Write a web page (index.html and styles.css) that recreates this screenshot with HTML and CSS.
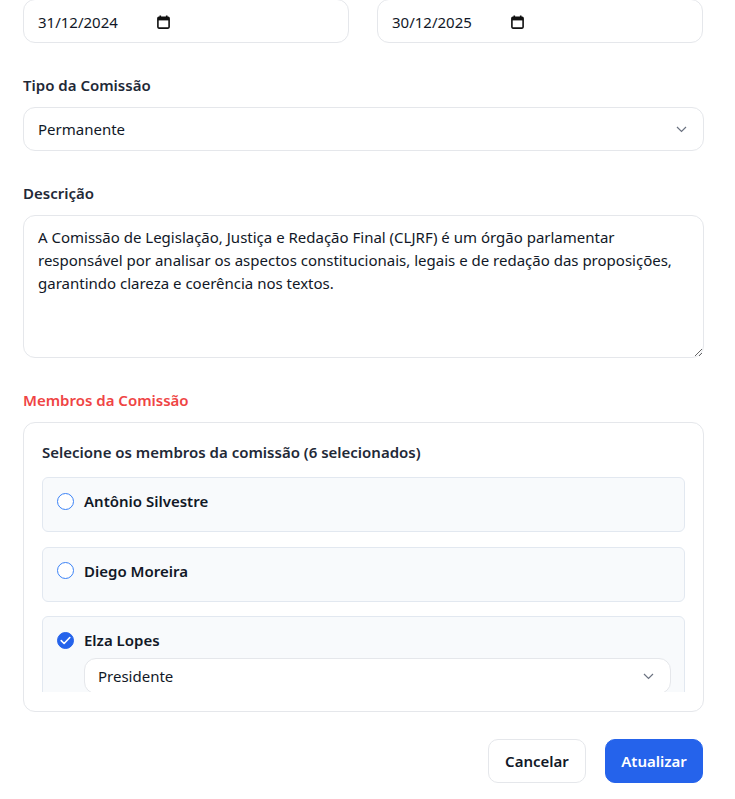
FILE: index.html
```html
<!DOCTYPE html>
<html lang="pt-BR">
<head>
<meta charset="utf-8">
<link rel="stylesheet" href="styles.css">
</head>
<body>
<form class="form">
  <div class="date-row">
    <div class="input date">
      <span class="date-text">31/12/2024</span>
      <svg class="cal" width="13" height="14" viewBox="0 0 13 14"><rect x="2.5" y="0.5" width="1.6" height="2.5" fill="#111"/><rect x="8.9" y="0.5" width="1.6" height="2.5" fill="#111"/><rect x="0.9" y="2.4" width="11.2" height="10.7" rx="1" fill="none" stroke="#111" stroke-width="1.6"/><rect x="0.9" y="2.4" width="11.2" height="3" fill="#111"/></svg>
    </div>
    <div class="input date">
      <span class="date-text">30/12/2025</span>
      <svg class="cal" width="13" height="14" viewBox="0 0 13 14"><rect x="2.5" y="0.5" width="1.6" height="2.5" fill="#111"/><rect x="8.9" y="0.5" width="1.6" height="2.5" fill="#111"/><rect x="0.9" y="2.4" width="11.2" height="10.7" rx="1" fill="none" stroke="#111" stroke-width="1.6"/><rect x="0.9" y="2.4" width="11.2" height="3" fill="#111"/></svg>
    </div>
  </div>

  <div class="field">
    <label class="label">Tipo da Comissão</label>
    <div class="select-wrap">
      <select class="input select">
        <option>Permanente</option>
        <option>Temporária</option>
      </select>
      <svg class="chevron" width="11" height="7" viewBox="0 0 11 7"><path d="M1 1l4.5 4.5L10 1" fill="none" stroke="#6b7280" stroke-width="1.2"/></svg>
    </div>
  </div>

  <div class="field">
    <label class="label">Descrição</label>
    <textarea class="input textarea">A Comissão de Legislação, Justiça e Redação Final (CLJRF) é um órgão parlamentar responsável por analisar os aspectos constitucionais, legais e de redação das proposições, garantindo clareza e coerência nos textos.</textarea>
  </div>

  <div class="field">
    <label class="label label-red">Membros da Comissão</label>
    <div class="card">
      <div class="card-title">Selecione os membros da comissão (6 selecionados)</div>
      <div class="list">
        <div class="member">
          <div class="member-row">
            <span class="check"></span>
            <span class="name">Antônio Silvestre</span>
          </div>
        </div>
        <div class="member">
          <div class="member-row">
            <span class="check"></span>
            <span class="name">Diego Moreira</span>
          </div>
        </div>
        <div class="member">
          <div class="member-row">
            <span class="check checked"><svg width="11" height="9" viewBox="0 0 11 9"><path d="M1.2 4.6l2.9 2.9L9.8 1.5" fill="none" stroke="#fff" stroke-width="1.6" stroke-linecap="round" stroke-linejoin="round"/></svg></span>
            <span class="name">Elza Lopes</span>
          </div>
          <div class="select-wrap role">
            <select class="input select role-select">
              <option>Presidente</option>
              <option>Vice-Presidente</option>
              <option>Membro</option>
            </select>
            <svg class="chevron" width="11" height="7" viewBox="0 0 11 7"><path d="M1 1l4.5 4.5L10 1" fill="none" stroke="#6b7280" stroke-width="1.2"/></svg>
          </div>
        </div>
      </div>
    </div>
  </div>

  <div class="actions">
    <button type="button" class="btn btn-outline">Cancelar</button>
    <button type="button" class="btn btn-primary">Atualizar</button>
  </div>
</form>
</body>
</html>
```
FILE: styles.css
```css
* { box-sizing: border-box; }
html, body { margin: 0; background: #fff; }
body {
  font-family: "Noto Sans", "Open Sans", sans-serif;
  font-size: 15px;
  color: #111827;
  overflow: hidden;
}
.form {
  padding: 0 31px 0 23px;
  margin-top: -1px;
  display: flex;
  flex-direction: column;
}
.input {
  font-family: inherit;
  font-size: 15px;
  color: #111827;
  background: #fff;
  border: 1px solid #e5e7eb;
  border-radius: 12px;
  outline: none;
  width: 100%;
}
.date-row {
  display: grid;
  grid-template-columns: 326px 326px;
  column-gap: 28px;
}
.date {
  height: 44px;
  padding: 2px 14px 0;
  display: flex;
  align-items: center;
}
.date-text {
  width: 119px;
  flex: none;
  color: #111827;
}
.cal { flex: none; margin-top: -1px; }
.field {
  margin-top: 31px;
  display: flex;
  flex-direction: column;
}
.label {
  font-weight: 600;
  font-size: 15px;
  line-height: 22px;
  color: #1f2937;
  margin-bottom: 11px;
}
.label-red { color: #ef4444; }
.select-wrap { position: relative; }
.select {
  appearance: none;
  -webkit-appearance: none;
  height: 44px;
  padding: 0 40px 0 14px;
}
.chevron {
  position: absolute;
  right: 17px;
  top: 19px;
  pointer-events: none;
}
.textarea {
  height: 143px;
  padding: 10px 14px;
  line-height: 23px;
  resize: vertical;
  display: block;
}
.card {
  border: 1px solid #e5e7eb;
  border-radius: 12px;
  padding: 18px 18px 19px;
}
.card-title {
  font-weight: 600;
  line-height: 22px;
  color: #1f2937;
  margin-bottom: 14px;
}
.list {
  height: 215px;
  overflow: hidden;
  display: flex;
  flex-direction: column;
  gap: 14.5px;
}
.member {
  flex: none;
  background: #f8fafc;
  border: 1px solid #e2e8f0;
  border-radius: 6px;
  padding: 13px 13px 13px 14px;
}
.member-row {
  display: flex;
  align-items: center;
  gap: 10px;
  height: 20px;
  margin-bottom: 7px;
}
.check {
  width: 17px;
  height: 17px;
  border: 1.5px solid #3b82f6;
  border-radius: 50%;
  background: #fff;
  display: inline-flex;
  align-items: center;
  justify-content: center;
  flex: none;
}
.check.checked {
  background: #2563eb;
  border-color: #2563eb;
}
.name {
  font-weight: 600;
  font-size: 15px;
  color: #111827;
}
.role { margin: 8px 0 0 27px; }
.role-select {
  height: 36px;
  padding-left: 13px;
}
.role .chevron { top: 15px; }
.actions {
  margin: 27px 1px 0 0;
  display: flex;
  justify-content: flex-end;
  gap: 19px;
}
.btn {
  font-family: inherit;
  font-size: 15px;
  font-weight: 600;
  height: 44px;
  width: 98px;
  border-radius: 10px;
  cursor: pointer;
}
.btn-outline {
  background: #fff;
  color: #111827;
  border: 1px solid #e5e7eb;
}
.btn-primary {
  background: #2563eb;
  color: #fff;
  border: 1px solid #2563eb;
}
```
